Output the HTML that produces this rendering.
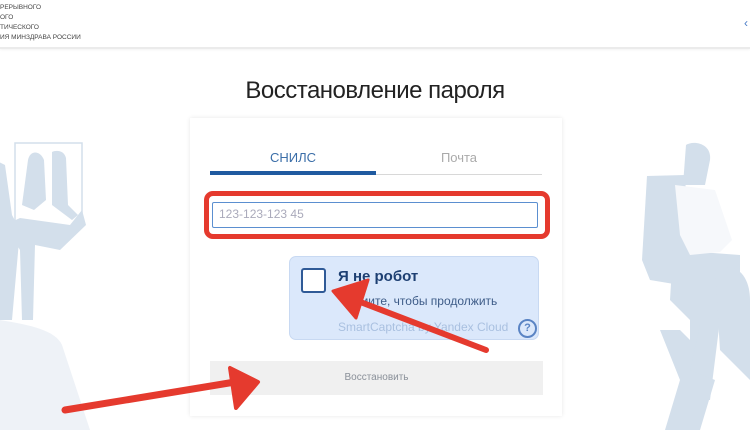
<!DOCTYPE html>
<html><head><meta charset="utf-8"><style>
body{margin:0;width:750px;height:430px;overflow:hidden;background:#fff;font-family:"Liberation Sans",sans-serif;position:relative}
.hdr{position:absolute;left:0;top:0;width:750px;height:47px;background:#fff;border-bottom:2px solid #ebebeb;box-shadow:0 1px 2px rgba(0,0,0,.05)}
.hdr div{position:absolute;left:0;font-size:6.5px;color:#444;line-height:10px}
.title{position:absolute;left:0;width:750px;top:77px;text-align:center;font-size:24px;color:#222;letter-spacing:-0.5px}
.card{position:absolute;left:190px;top:118px;width:372px;height:298px;background:#fff;box-shadow:0 0 4px rgba(0,0,0,.1)}
</style></head><body>
<svg style="position:absolute;left:0;top:0" width="750" height="430">
<g fill="#d3dfeb">
<path d="M-5 160 L5 165 L12 215 L20 230 L12 320 L0 320Z"/>
<path d="M28 160 C30 150 40 150 44 160 L46 200 L34 210 L22 205Z"/>
<path d="M52 152 C56 150 64 150 66 158 L68 205 L78 215 L72 220 L52 205Z"/>
<path d="M5 225 L20 218 L70 225 L82 210 L86 225 L60 250 L35 245 L33 320 L22 320 L20 250Z"/>
<path d="M0 320 C30 325 55 330 62 345 L90 430 L0 430Z" fill="#eef2f7"/>
<path d="M647 176 L685 175 L690 270 L680 285 L650 280 L642 260Z"/>
<path d="M686 145 C693 140 712 143 710 160 L705 185 L683 185Z"/>
<path d="M673 250 L740 255 L740 300 L720 320 L710 400 L690 400 L690 320 L670 300Z"/>
<path d="M660 330 L680 330 L690 340 L700 325 L690 370 L715 380 L700 430 L665 430 L680 380Z" />
<path d="M715 270 C740 260 750 280 750 300 L750 380 L720 350Z"/>
</g>
<path d="M675 185 L715 190 L732 240 L720 252 L690 255 L680 235Z" fill="#f6f8fb"/>
<rect x="15" y="143" width="67" height="83" fill="none" stroke="#d3dfeb" stroke-width="1.5"/>
</svg>
<div class="hdr">
<div style="top:3px">РЕРЫВНОГО</div>
<div style="top:13px">ОГО</div>
<div style="top:23px">ТИЧЕСКОГО</div>
<div style="top:33px">ИЯ МИНЗДРАВА РОССИИ</div>
<div style="left:744px;top:18px;color:#4a7cc7;font-size:12px">‹</div>
</div>
<div class="title">Восстановление пароля</div>
<div class="card"></div>
<div style="position:absolute;left:210px;top:150px;width:166px;text-align:center;font-size:13px;color:#3b6ea8">СНИЛС</div>
<div style="position:absolute;left:376px;top:150px;width:166px;text-align:center;font-size:13px;color:#aaa">Почта</div>
<div style="position:absolute;left:210px;top:174px;width:332px;height:1px;background:#d8d8d8"></div>
<div style="position:absolute;left:210px;top:171px;width:166px;height:4px;background:#1f5aa0"></div>
<div style="position:absolute;left:204px;top:191px;width:336px;height:38px;border:5px solid #e53a2e;border-radius:9px"></div>
<div style="position:absolute;left:212px;top:202px;width:324px;height:24px;border:1px solid #5b8fd0;border-radius:2px;background:#fff"></div>
<div style="position:absolute;left:219px;top:207px;font-size:12px;color:#aab">123-123-123 45</div>
<div style="position:absolute;left:289px;top:256px;width:250px;height:84px;background:#dbe8fb;border:1px solid #c8d9f2;border-radius:7px;box-sizing:border-box"></div>
<div style="position:absolute;left:301px;top:268px;width:21px;height:21px;border:2px solid #2f5a97;border-radius:3px;background:#fff"></div>
<div style="position:absolute;left:338px;top:268px;font-size:15px;color:#1d3f72;font-weight:bold">Я не робот</div>
<div style="position:absolute;left:352px;top:294px;font-size:12px;color:#3d5b87">жмите, чтобы продолжить</div>
<div style="position:absolute;left:338px;top:320px;font-size:12px;color:#a9c0e0">SmartCaptcha by Yandex Cloud</div>
<div style="position:absolute;left:518px;top:319px;width:15px;height:15px;border:2px solid #5a84c4;border-radius:50%;font-size:11px;color:#5a84c4;text-align:center;line-height:15px;font-weight:bold">?</div>
<div style="position:absolute;left:210px;top:361px;width:333px;height:34px;background:#f0f0f0;text-align:center;line-height:34px;font-size:10px;color:#8a9099">Восстановить</div>
<svg style="position:absolute;left:0;top:0" width="750" height="430">
<g fill="#e53a2e" stroke="#e53a2e" stroke-linejoin="round" stroke-linecap="round">
<line x1="486" y1="350" x2="350" y2="298" stroke-width="6"/>
<path d="M333 291 L368 280 L356 318Z" stroke-width="3"/>
<line x1="65" y1="410" x2="235" y2="382" stroke-width="7"/>
<path d="M258 382 L230 368 L236 408Z" stroke-width="4"/>
</g>
</svg>
</body></html>
